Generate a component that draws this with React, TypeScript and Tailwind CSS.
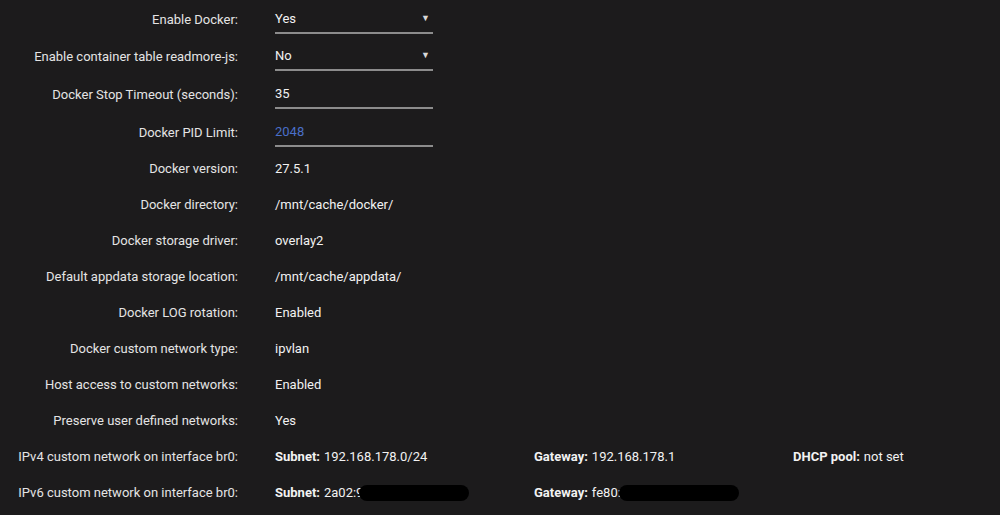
import React from "react";

type Row = {
    label: string;
    h: string;
    kind?: "select" | "input" | "text";
    value?: string;
    blue?: boolean;
};

const rows: Row[] = [
    { label: "Enable Docker:", h: "h-[37px]", kind: "select", value: "Yes" },
    { label: "Enable container table readmore-js:", h: "h-[38px]", kind: "select", value: "No" },
    { label: "Docker Stop Timeout (seconds):", h: "h-[38px]", kind: "input", value: "35" },
    { label: "Docker PID Limit:", h: "h-[37px]", kind: "input", value: "2048", blue: true },
    { label: "Docker version:", h: "h-[36px]", value: "27.5.1" },
    { label: "Docker directory:", h: "h-[36px]", value: "/mnt/cache/docker/" },
    { label: "Docker storage driver:", h: "h-[36px]", value: "overlay2" },
    { label: "Default appdata storage location:", h: "h-[36px]", value: "/mnt/cache/appdata/" },
    { label: "Docker LOG rotation:", h: "h-[36px]", value: "Enabled" },
    { label: "Docker custom network type:", h: "h-[36px]", value: "ipvlan" },
    { label: "Host access to custom networks:", h: "h-[36px]", value: "Enabled" },
    { label: "Preserve user defined networks:", h: "h-[36px]", value: "Yes" },
];

const Redacted = ({ w, ml }: { w: string; ml: string }) => (
    <span className={`inline-block ${w} ${ml} h-[16px] bg-black rounded-full`} />
);

const Value = ({ row }: { row: Row }) => {
    if (row.kind === "select") {
        return (
            <div className="w-[158px] h-[28px] border-b-2 border-[#8c8c8c] flex items-center justify-between pr-[3px]">
                <span className="text-[#f2f2f2]">{row.value}</span>
                <span className="text-[9px] text-[#d8d8d8]">▼</span>
            </div>
        );
    }
    if (row.kind === "input") {
        return (
            <div className="w-[158px] h-[28px] border-b-2 border-[#8c8c8c] flex items-center">
                <span className={row.blue ? "text-[#4a6fc9]" : "text-[#f2f2f2]"}>{row.value}</span>
            </div>
        );
    }
    return <span className="text-[#f2f2f2]">{row.value}</span>;
};

const Label = ({ children }: { children: React.ReactNode }) => (
    <div className="w-[238px] shrink-0 text-right text-[#e4e4e4] whitespace-nowrap">{children}</div>
);

const NetCell = ({ k, v, children }: { k: string; v?: string; children?: React.ReactNode }) => (
    <div className="w-[259px] shrink-0 flex items-center whitespace-nowrap">
        <span className="font-bold text-[#f2f2f2]">{k}</span>
        <span className="text-[#f2f2f2] ml-[4px]">{v}</span>
        {children}
    </div>
);

export default function App() {
    return (
        <div
            className="w-[1000px] h-[515px] bg-[#1c1b1c] text-[13px] overflow-hidden pt-[1px]"
            style={{ fontFamily: 'Roboto, "Noto Sans", sans-serif' }}
        >
            {rows.map((r) => (
                <div key={r.label} className={`flex items-center ${r.h}`}>
                    <Label>{r.label}</Label>
                    <div className="ml-[37px]">
                        <Value row={r} />
                    </div>
                </div>
            ))}
            {/* network rows */}
            <div className="flex items-center h-[36px]">
                <Label>IPv4 custom network on interface br0:</Label>
                <div className="ml-[37px] flex">
                    <NetCell k="Subnet:" v="192.168.178.0/24" />
                    <NetCell k="Gateway:" v="192.168.178.1" />
                    <NetCell k="DHCP pool:" v="not set" />
                </div>
            </div>
            <div className="flex items-center h-[36px]">
                <Label>IPv6 custom network on interface br0:</Label>
                <div className="ml-[37px] flex">
                    <NetCell k="Subnet:" v="2a02:9">
                        <Redacted w="w-[110px]" ml="-ml-[4px]" />
                    </NetCell>
                    <NetCell k="Gateway:" v="fe80:">
                        <Redacted w="w-[120px]" ml="-ml-[2px]" />
                    </NetCell>
                </div>
            </div>
        </div>
    );
}
